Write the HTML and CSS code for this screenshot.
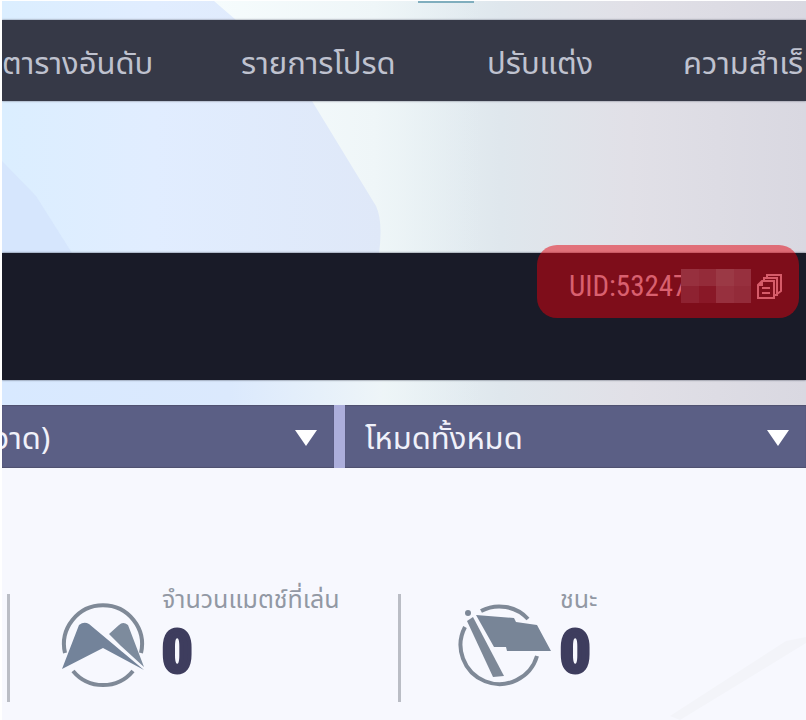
FILE: index.html
```html
<!DOCTYPE html>
<html lang="th">
<head>
<meta charset="utf-8">
<meta name="viewport" content="width=device-width, initial-scale=1">
<title>โปรไฟล์</title>
<link rel="stylesheet" href="styles.css">
</head>
<body>
<main class="page">
  <div class="hero">
    <svg class="backdrop" viewBox="0 0 804 404" preserveAspectRatio="none" aria-hidden="true">
      <defs>
        <linearGradient id="ice" gradientUnits="userSpaceOnUse" x1="0" y1="0" x2="380" y2="0"><stop offset="0" stop-color="#dbeeff"/><stop offset="0.4" stop-color="#e1edff"/><stop offset="1" stop-color="#dfe8f8"/></linearGradient>
        <linearGradient id="shade" gradientUnits="userSpaceOnUse" x1="212" y1="0" x2="480" y2="0"><stop offset="0" stop-color="#f6fcfd"/><stop offset="0.6" stop-color="#eff6f8"/><stop offset="1" stop-color="#e6eef2" stop-opacity="0"/></linearGradient>
        <linearGradient id="fade" x1="0" y1="0" x2="1" y2="0"><stop offset="0" stop-color="#d8e9ff"/><stop offset="0.6" stop-color="#dbe9fd"/><stop offset="1" stop-color="#eef5f8"/></linearGradient>
      </defs>
      <path fill="url(#shade)" d="M212 0H480V404H300Z"/>
      <path fill="url(#ice)" d="M0 0H212L234 19L310 100L374 205Q382 222 376 260L372 404H0Z"/>
      <path fill="#d6e6fd" d="M0 160L34 195L70 252H0Z"/>
      <path fill="url(#fade)" d="M0 378H380V404H0Z"/>
    </svg>
    <div class="topline"><span class="tab-mark"></span></div>
    <nav class="menu">
      <a href="#rank">ตารางอันดับ</a>
      <a href="#favorites">รายการโปรด</a>
      <a href="#customize">ปรับแต่ง</a>
      <a href="#achievements">ความสำเร็</a>
    </nav>
    <section class="profile">
      <div class="uid">
        <span class="uid-text">UID:53247</span>
        <span class="mosaic" aria-hidden="true"><i></i><i></i><i></i><i></i><i></i><i></i><i></i><i></i></span>
        <button class="copy" type="button" aria-label="คัดลอก UID">
          <svg viewBox="0 0 26 26" fill="none" stroke="currentColor" stroke-width="2">
            <path d="M5 8H17V25H1V12Z M5 8V12H1 M5 15H13 M5 20H13 M7 8V5H20V22H17 M10 5V2H24V18L20 21"/>
          </svg>
        </button>
      </div>
    </section>
  </div>
  <form class="filters">
    <label class="filter">
      <select class="cut" aria-label="ฤดูกาล"><option>วาด)</option></select>
      <svg viewBox="0 0 22 16" aria-hidden="true"><path d="M0 0H22L11 16Z"/></svg>
    </label>
    <label class="filter">
      <select aria-label="โหมด"><option>โหมดทั้งหมด</option></select>
      <svg viewBox="0 0 22 16" aria-hidden="true"><path d="M0 0H22L11 16Z"/></svg>
    </label>
  </form>
  <section class="stats">
    <svg class="streak" viewBox="0 0 136 130" aria-hidden="true"><path d="M0 126L116 51L136 47V53L10 130Z"/></svg>
    <article class="stat">
      <svg class="emblem" viewBox="0 0 90 84" aria-hidden="true">
        <g fill="none" stroke="#7f8997" stroke-width="4"><path d="M4 50A39 39 0 1 1 80 50"/><path d="M12 68A39 39 0 0 0 72 68"/></g>
        <path fill="#73839a" d="M18 22Q23 18 28 21L83 67L42 45L1 66Z"/>
        <path fill="#7d8b9d" d="M48 31L58 22Q62 18 67 22L83 64L60 43Z"/>
        <path fill="none" stroke="#f7f8fe" stroke-width="2" d="M46 32L62 48"/>
      </svg>
      <div class="figures"><h2>จำนวนแมตช์ที่เล่น</h2><strong>0</strong></div>
    </article>
    <article class="stat">
      <svg class="emblem" viewBox="0 0 90 84" aria-hidden="true">
        <g fill="none" stroke="#7f8997" stroke-width="4"><path d="M22 8A39 39 0 0 1 69 16"/><path d="M6 24A39 39 0 1 0 78 53"/></g>
        <path fill="#788597" d="M17 12L55 15L57 19L78 22L92 48H48L47 44H35Z"/>
        <path fill="#7d8897" d="M8 18L14 14L45 73L34 74Z"/><circle cx="9" cy="10" r="3" fill="#7d8897"/>
      </svg>
      <div class="figures"><h2>ชนะ</h2><strong>0</strong></div>
    </article>
  </section>
</main>
</body>
</html>
```
FILE: styles.css
```css
* { box-sizing: border-box; }

body {
  margin: 0;
  padding: 1px 0 0 2px;
  background: #fff;
  font-family: "Noto Sans Thai", "Noto Sans", "Open Sans", sans-serif;
}

.page {
  display: flex;
  flex-direction: column;
  min-height: calc(100vh - 1px);
  overflow: hidden;
  background: #f7f8fe;
}

.hero {
  position: relative;
  padding-bottom: 25px;
  background: linear-gradient(90deg, #e2edff 0%, #e9f3f6 48%, #dfe7ed 62%, #e1e0e7 78%, #d9d8e1 100%);
}

.backdrop {
  position: absolute;
  inset: 0;
  width: 100%;
  height: 100%;
}

.topline { position: relative; height: 19px; padding-left: 416px; }

.tab-mark {
  display: block;
  width: 56px;
  height: 2px;
  background: #80aebe;
}

.menu {
  position: relative;
  display: grid;
  grid-template-columns: 239fr 246fr 196fr 123fr;
  align-items: center;
  height: 81px;
  padding-top: 8px;
  margin-bottom: 152px;
  background: #363947;
  box-shadow: 0 0 2px #6c7280;
}

.menu a {
  min-width: 0;
  color: #bfc2cf;
  font-size: 31px;
  line-height: 40px;
  text-decoration: none;
  white-space: nowrap;
}

.profile {
  position: relative;
  height: 127px;
  background: #191b28;
  box-shadow: 0 0 2px #4c5260;
}

.uid {
  position: absolute;
  top: -8px;
  right: 7px;
  display: flex;
  align-items: center;
  width: 262px;
  height: 73px;
  padding: 8px 16px 0 32px;
  border-radius: 20px;
  background: rgba(228, 0, 12, 0.5);
  color: #d9606f;
}

.uid-text {
  width: 112px;
  font: 29px/40px "Roboto Condensed", sans-serif;
}

.mosaic {
  z-index: 1;
  display: grid;
  grid-template-columns: repeat(4, 1fr);
  width: 70px;
  height: 34px;
}

.mosaic i { background: #97303e; }
.mosaic i:nth-child(2) { background: #942b39; }
.mosaic i:nth-child(3) { background: #9b3945; }
.mosaic i:nth-child(5) { background: #8e2231; }
.mosaic i:nth-child(6) { background: #891827; }
.mosaic i:nth-child(8) { background: #932b39; }

.copy {
  width: 26px;
  height: 26px;
  margin-left: 6px;
  padding: 0;
  border: 0;
  background: none;
  color: #d65c69;
}

.copy svg { display: block; width: 26px; height: 26px; }

.filters {
  display: grid;
  grid-template-columns: 332fr 461fr;
  gap: 11px;
  height: 63px;
  background: #acaedb;
}

.filter {
  display: flex;
  align-items: center;
  padding: 3px 17px 0 0;
  background: #5b5f85;
  box-shadow: inset 0 1px 1px #4f526f, inset 0 -1px 1px #4f526f;
}

.filter select {
  flex: 1;
  min-width: 0;
  height: 60px;
  padding: 4px 0 0 20px;
  border: 0;
  appearance: none;
  background: none;
  color: #f0f1fa;
  font: 31px/40px "Noto Sans Thai", "Noto Sans", "Open Sans", sans-serif;
}

.filter .cut { padding-left: 0; text-indent: -8px; }
.filter svg { width: 22px; height: 16px; fill: #fff; }

.stats {
  position: relative;
  display: grid;
  grid-template-columns: 391fr 408fr;
  flex: 1;
  align-items: start;
  padding: 116px 0 0 5px;
}

.stat {
  display: flex;
  height: 120px;
  padding: 19px 0 0 54px;
  background: linear-gradient(#babdc5, #babdc5) 0 10px / 3px 108px no-repeat;
}

.stat + .stat { padding-left: 61px; }

.emblem { flex: none; width: 90px; height: 84px; margin-right: 11px; overflow: visible; }
.figures { margin-top: -18px; }

.figures h2 {
  margin: 0;
  color: #9298a4;
  font-size: 25px;
  font-weight: 400;
  line-height: 30px;
  white-space: nowrap;
}

.figures strong {
  display: block;
  color: #3e3d5e;
  font: 700 60px/74px "Roboto Condensed", sans-serif;
  -webkit-text-stroke: 4px #3e3d5e;
}

.streak {
  position: absolute;
  right: 0;
  bottom: 0;
  width: 136px;
  height: 130px;
  fill: #f3f4f9;
}
```
